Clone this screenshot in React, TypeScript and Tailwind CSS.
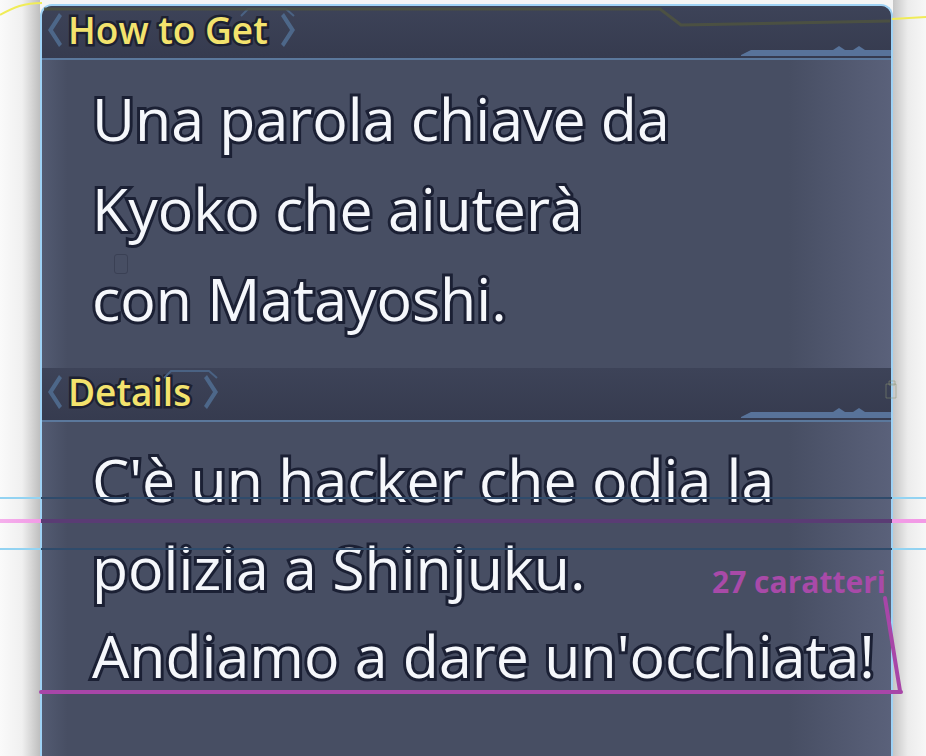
import React from "react"

const outlineBody = "[-webkit-text-stroke:6px_#1b2034] [paint-order:stroke_fill]"
const outlineHead = "[-webkit-text-stroke:5px_#1d2132] [paint-order:stroke_fill]"
const font = { fontFamily: '"Open Sans", "Noto Sans", sans-serif' }

// section header band with chevrons
function SectionHeader({ title }: { title: string }) {
  return (
    <div className="relative h-[54px] flex items-center pl-[3px] pb-[5px] border-b-2 border-[#5b789c] bg-[linear-gradient(to_bottom,#3d4358,#363b4f)]">
      <svg width="18" height="38" viewBox="0 0 18 38" className="shrink-0">
        <path d="M14 2 L3 19 L14 36 L17 33 L8 19 L17 5 Z" fill="#4d6789" />
      </svg>
      <div className="relative flex items-center ml-[5px]">
        <span
          className={`text-[37px] leading-none font-semibold text-[#f3e36d] ${outlineHead}`}
          style={font}
        >
          {title}
        </span>
        <svg width="20" height="38" viewBox="0 0 20 38" className="shrink-0 ml-[12px]">
          <path d="M4 2 L15 19 L4 36 L1 33 L10 19 L1 5 Z" fill="#4d6789" />
        </svg>
        <svg
          width="56"
          height="10"
          viewBox="0 0 56 10"
          className="absolute right-[4px] top-[-4px]"
        >
          <path d="M1 9 L8 2 L46 2 L54 9" fill="none" stroke="#4a6283" strokeWidth="2" />
        </svg>
      </div>
      <svg
        width="150"
        height="10"
        viewBox="0 0 150 10"
        className="absolute right-0 bottom-[2px]"
      >
        <path
          d="M0 9 L10 4 L92 4 L98 0 L104 4 L112 4 L118 0 L124 4 L150 4 L150 10 L0 10 Z"
          fill="#58739a"
        />
      </svg>
    </div>
  )
}

export default function App() {
  return (
    <div className="relative w-[926px] h-[756px] overflow-hidden flex bg-[#f5f5f5]">
      {/* left page shadow */}
      <div className="w-[40px] h-full bg-[linear-gradient(to_right,#fafafa_0%,#f0f0f0_55%,#bfbfbf_100%)]" />

      {/* panel */}
      <div className="w-[853px] h-full pt-[4px]">
        <div className="relative h-full flex flex-col rounded-t-[12px] border-2 border-b-0 border-[#9fd2f5] overflow-hidden bg-[linear-gradient(to_right,#535b72,#474e63_3%,#474e63_88%,#5a617a)]">
          <SectionHeader title="How to Get" />

          <div
            className={`h-[308px] pt-[13px] pl-[50px] text-[59px] leading-[90px] font-medium text-[#f5f7fb] ${outlineBody}`}
            style={font}
          >
            <p>Una parola chiave da</p>
            <p>Kyoko che aiuterà</p>
            <p>con Matayoshi.</p>
          </div>

          <SectionHeader title="Details" />

          <div
            className={`flex-1 pt-[13px] pl-[50px] text-[59px] leading-[88px] font-medium text-[#f5f7fb] ${outlineBody}`}
            style={font}
          >
            <p>C'è un hacker che odia la</p>
            <p>polizia a Shinjuku.</p>
            <p>Andiamo a dare un'occhiata!</p>
          </div>

          {/* faint artefact icon */}
          <div className="absolute left-[72px] top-[248px] w-[14px] h-[20px] rounded-[3px] border border-[#3a4054]" />
        </div>
      </div>

      {/* right page shadow */}
      <div className="flex-1 h-full bg-[linear-gradient(to_right,#c6c6c6_0%,#ececec_45%,#f7f7f7_100%)]" />

      {/* guide lines crossing the page: light outside the panel, dark over it */}
      <div className="absolute inset-x-0 top-[497px] h-[2px] bg-[linear-gradient(to_right,#93d3f2_0px,#93d3f2_41px,#2f4b6b_41px,#2f4b6b_892px,#93d3f2_892px)]" />
      <div className="absolute inset-x-0 top-[519px] h-[4px] bg-[linear-gradient(to_right,#f5b0ec_0px,#f29ae6_41px,#5a3c74_41px,#5a3c74_892px,#f29ae6_892px)]" />
      <div className="absolute inset-x-0 top-[548px] h-[2px] bg-[linear-gradient(to_right,#93d3f2_0px,#93d3f2_41px,#2f4b6b_41px,#2f4b6b_892px,#93d3f2_892px)]" />

      {/* annotation */}
      <span
        className="absolute left-[712px] top-[562px] text-[30px] leading-[40px] font-bold text-[#a84aa8]"
        style={font}
      >
        27 caratteri
      </span>

      <svg
        width="926"
        height="756"
        viewBox="0 0 926 756"
        className="absolute inset-0 pointer-events-none"
      >
        <path d="M0 15 C 14 7 24 3 42 3" fill="none" stroke="#f0ec58" strokeWidth="2" />
        <path d="M892 19 L926 17" fill="none" stroke="#f0ec58" strokeWidth="2" />
        <path
          d="M44 9 L660 9 L681 25 L890 21"
          fill="none"
          stroke="#4f5340"
          strokeWidth="3"
          opacity="0.85"
        />
        <path d="M41 692 L901 692" stroke="#a846a8" strokeWidth="4" strokeLinecap="round" />
        <path d="M885 598 L900 691" stroke="#a846a8" strokeWidth="4" strokeLinecap="round" />
        <path
          d="M886 384 h10 v14 h-10 z M889 381 h6 v4 h-6 z"
          fill="none"
          stroke="#8d9476"
          strokeWidth="1"
          opacity="0.5"
        />
      </svg>
    </div>
  )
}
